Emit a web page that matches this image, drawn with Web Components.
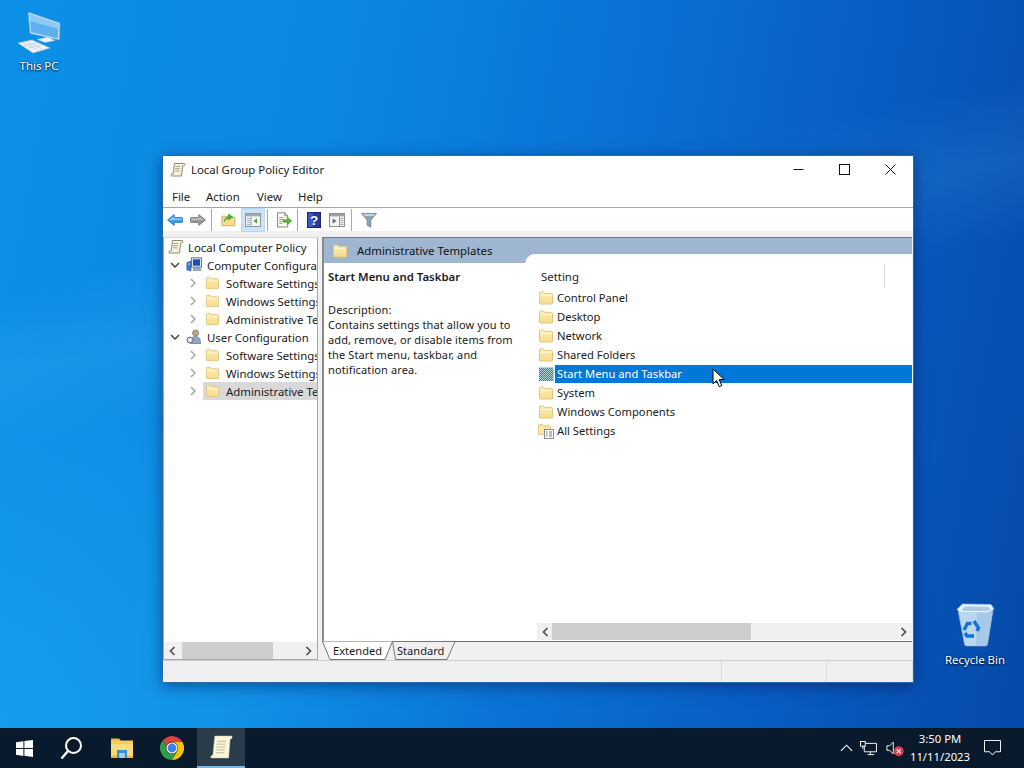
<!DOCTYPE html>
<html>
<head>
<meta charset="utf-8">
<title>Local Group Policy Editor</title>
<style>
  html, body { margin: 0; padding: 0; height: 100%; overflow: hidden; }
  body { font: 11.4px "Noto Sans", "Liberation Sans", sans-serif; color: #1a1a1a; }
</style>
</head>
<body>
<win-desktop>
  <desktop-icon slot="icons" icon="pc" x="1" y="10" gap="4">This PC</desktop-icon>
  <desktop-icon slot="icons" icon="bin" x="937" y="603" gap="5">Recycle Bin</desktop-icon>
  <mmc-window slot="window">
    <title-bar>Local Group Policy Editor</title-bar>
    <menu-bar></menu-bar>
    <tool-bar></tool-bar>
    <div style="display:flex;flex:1;min-height:0">
      <tree-pane>
        <tree-row icon="scroll" level="0" expander="none">Local Computer Policy</tree-row>
        <tree-row icon="computer" level="1" expander="open">Computer Configuration</tree-row>
        <tree-row icon="folder" level="2" expander="closed">Software Settings</tree-row>
        <tree-row icon="folder" level="2" expander="closed">Windows Settings</tree-row>
        <tree-row icon="folder" level="2" expander="closed">Administrative Templates</tree-row>
        <tree-row icon="user" level="1" expander="open">User Configuration</tree-row>
        <tree-row icon="folder" level="2" expander="closed">Software Settings</tree-row>
        <tree-row icon="folder" level="2" expander="closed">Windows Settings</tree-row>
        <tree-row icon="folder" level="2" expander="closed" selected>Administrative Templates</tree-row>
      </tree-pane>
      <detail-pane>
        <list-row icon="folder">Control Panel</list-row>
        <list-row icon="folder">Desktop</list-row>
        <list-row icon="folder">Network</list-row>
        <list-row icon="folder">Shared Folders</list-row>
        <list-row icon="dither" selected>Start Menu and Taskbar</list-row>
        <list-row icon="folder">System</list-row>
        <list-row icon="folder">Windows Components</list-row>
        <list-row icon="allsettings">All Settings</list-row>
      </detail-pane>
    </div>
    <status-bar></status-bar>
  </mmc-window>
  <task-bar slot="taskbar"></task-bar>
</win-desktop>

<script>
const ICONS = {
  folder: `<svg viewBox="0 0 16 16"><defs><linearGradient id="f" x1="0" y1="0" x2="0" y2="1"><stop offset="0" stop-color="#fbeeb8"/><stop offset="1" stop-color="#f6dc8c"/></linearGradient></defs><path d="M1.500 3a1 1 0 0 1 1-1h3.200l1.300 1.400h6.500a1 1 0 0 1 1 1v8.800a.8.8 0 0 1-.8.800H2.300a.8.8 0 0 1-.8-.8z" fill="url(#f)" stroke="#e2c67c"/><path d="M2.200 5h11.600v1H2.200z" fill="#fff6d2"/></svg>`,
  dither: `<svg viewBox="0 0 16 16"><defs><pattern id="d" width="2" height="2" patternUnits="userSpaceOnUse"><rect width="2" height="2" fill="#2f7f96"/><rect width="1" height="1" fill="#b5d6d8"/><rect x="1" y="1" width="1" height="1" fill="#b5d6d8"/></pattern></defs><rect x="1" y="1.500" width="14.500" height="13.500" fill="url(#d)"/></svg>`,
  allsettings: `<svg viewBox="0 0 16 16"><path d="M.5 2.500a1 1 0 0 1 1-1h3l1.200 1.300h5.800a1 1 0 0 1 1 1v7.600H.5z" fill="#f7e6a6" stroke="#e2c67c"/><rect x="6.500" y="6.500" width="9" height="9" fill="#fff" stroke="#8a8a8a"/><path d="M8 9h1.500M11 9h3M8 11h1.500M11 11h3M8 13h1.500M11 13h3" stroke="#777"/></svg>`,
  scroll: `<svg viewBox="0 0 16 16"><path d="M4.500 1.500h9.800c.9 0 .9 2-.2 2.400L12.600 4 11.500 14h-9.700c-1.100 0-1.100-1.900 0-2.200h1.400z" fill="#f8f2d8" stroke="#8f8a78"/><path d="M5.600 4.500h4.600M5.300 6.700h4.600M5 8.900h4.600" stroke="#a8a28c"/></svg>`,
  computer: `<svg viewBox="0 0 16 16"><rect x="5.500" y=".8" width="10" height="9.400" fill="#dfe6ee" stroke="#6b7c92"/><rect x="7" y="2.300" width="7" height="6.400" fill="#1d4fb8"/><path d="M8 11h6l1 2.500H7z" fill="#9fb0c8" stroke="#6b7c92" stroke-width=".6"/><path d="M.8 5.500 5 4v10l-4.200-1z" fill="#3c7fd0" stroke="#245a9c" stroke-width=".6"/><circle cx="3" cy="7" r=".8" fill="#cfe3f7"/></svg>`,
  user: `<svg viewBox="0 0 16 16"><circle cx="9.500" cy="4" r="3" fill="#c9a27a" stroke="#6c7480" stroke-width=".7"/><path d="M4.500 14.500c0-5 1.800-7 5-7s5 2 5 7z" fill="#8fa6c4" stroke="#5d7190" stroke-width=".7"/><circle cx="4" cy="11" r="3" fill="#cfd6de" stroke="#6c7480"/><circle cx="4" cy="11" r="1" fill="#fff"/></svg>`,
  back: `<svg viewBox="0 0 16 16"><path d="M.6 8 7.200 2.600v3h7.600c.5 0 .7.300.7.700v3.400c0 .4-.2.700-.7.700H7.200v3z" fill="#3aa0e8" stroke="#1f6fb5" stroke-width=".8"/><path d="M2.300 8 6.600 4.600v2h8v1.200z" fill="#9ad4f8"/></svg>`,
  forward: `<svg viewBox="0 0 16 16"><path d="M15.400 8 8.800 2.600v3H1.200c-.5 0-.7.300-.7.700v3.400c0 .4.200.7.700.7h7.600v3z" fill="#9a9a9a" stroke="#6f6f6f" stroke-width=".8"/><path d="M1.400 6.600h8V4.800L13.600 8H1.400z" fill="#c4c4c4"/></svg>`,
  up: `<svg viewBox="0 0 16 16"><path d="M1 4.500h4l1 1.200h8.800v9H1z" fill="#f5dd8f" stroke="#cfae5e"/><path d="M3.500 10.500C3.800 7 5.500 5 8 4.400V2l4.600 3.400L8 8.600V6.400c-2 .4-3.400 2-4.500 4.100z" fill="#4fae3a" stroke="#2d8320" stroke-width=".5"/></svg>`,
  tree: `<svg viewBox="0 0 16 16"><rect x=".5" y="1.500" width="15" height="13" fill="#f4f8fb" stroke="#8f989f"/><rect x="1" y="2" width="14" height="2.400" fill="#a3abb2"/><path d="M6 5v9" stroke="#8f989f"/><path d="M2 6.500h3M2 8.500h3M2 10.500h3M2 12.500h3" stroke="#a8b0b6"/><path d="M12 6.500v5L8.400 9z" fill="#4aa53a"/></svg>`,
  export: `<svg viewBox="0 0 16 16"><path d="M1.500.8h7.200l3 3V15H1.500z" fill="#fbfbf4" stroke="#8a8a80"/><path d="M8.700.8v3h3" fill="none" stroke="#8a8a80"/><path d="M3.200 5.500h4M3.200 7.500h4M3.200 9.500h3M3.200 11.500h3" stroke="#a0a090"/><path d="M7 7.800h4.400V5.400L15.800 9l-4.400 3.600v-2.400H7z" fill="#58b63c" stroke="#2f8a1e" stroke-width=".5"/></svg>`,
  help: `<svg viewBox="0 0 14 16"><rect x=".5" y=".5" width="13" height="15" fill="#23379a" stroke="#1b2a78"/><path d="M1 1h5v14H1z" fill="#3d58c4"/><text x="7" y="13" font-family="Liberation Sans, sans-serif" font-weight="700" font-size="13.500" fill="#fff" text-anchor="middle">?</text></svg>`,
  props: `<svg viewBox="0 0 16 16"><rect x=".5" y="1.500" width="15" height="13" fill="#f4f4f4" stroke="#8f8f8f"/><rect x="1" y="2" width="14" height="2.400" fill="#a0a0a0"/><path d="M10.500 5v9" stroke="#8f8f8f"/><path d="M11.500 6.500h3M11.500 8.500h3M11.500 10.500h3M11.500 12.500h3" stroke="#a6a6a6"/><path d="M3.600 6.500v5l4-2.500z" fill="#6a6a6a"/></svg>`,
  filter: `<svg viewBox="0 0 16 16"><path d="M.6 1.400h14.800L9.800 8.200v7l-3.600-2V8.200z" fill="#8ba4b4" stroke="#5f7484" stroke-width=".7"/><path d="M2.400 2.200h11.200l-1.200 1.600H3.600z" fill="#dce7ee"/></svg>`,
  pc: `<svg viewBox="0 0 44 44"><path d="M11 2 43 13 42.500 30 13 23.500z" fill="#d4ebfb" stroke="#5f9fd4" stroke-width=".7"/><path d="M12.500 4 41.500 14 41 28.500 14 22.300z" fill="#5fb0ee"/><path d="M12.500 4 41.500 14v5L13 11z" fill="#8ccbf6"/><path d="M20 29.500l11-2.500 7 3.500-10 2z" fill="#e9f2f8" stroke="#a8c4d8" stroke-width=".5"/><path d="M1 33 15 30 33 38 16 43z" fill="#eef3f7" stroke="#b6c6d2" stroke-width=".6"/><path d="M5 32.500 21 40M9 31.500 25 39M7 36l13-3M11 38l13-3" stroke="#b6c6d2" stroke-width=".6"/></svg>`,
  bin: `<svg viewBox="0 0 40 44"><path d="M3 7 9.500 41.500Q10 43 12 43H30Q32 43 32.500 41.500L38 7z" fill="#b9d8ef" stroke="#8db2d0" stroke-width=".6"/><path d="M22 8 21 43h9Q32 43 32.500 41.500L38 7z" fill="#9cc5e6" opacity=".7"/><path d="M2 6.500 7.500 1 36 1.500 39 6 33 9.500 6 9.500z" fill="#e6f1fa" stroke="#a8c8e0" stroke-width=".6"/><path d="M7 6.500 10 3.500 33.500 3.800 35.500 6.200 32 8 8 8z" fill="#a9cbe5"/><g fill="none" stroke="#1572d8" stroke-width="3.400"><path d="M9 27l3.500-6.500h4"/><path d="M19 18l4.500 7-1.500 3"/><path d="M19 33h-7l-2-3"/></g></svg>`,
  winlogo: `<svg viewBox="0 0 17 17"><path d="M0 2.300 7.400 1.200v6.900H0zM8.400 1.100 17 0v8.100H8.400zM0 9h7.400v6.900L0 14.800zM8.400 9H17v8l-8.600-1.200z" fill="#fff"/></svg>`,
  search: `<svg viewBox="0 0 24 24"><circle cx="13.500" cy="9.500" r="7.500" fill="none" stroke="#fff" stroke-width="2"/><path d="M8 15 1.500 22.500" stroke="#fff" stroke-width="2.400"/></svg>`,
  explorer: `<svg viewBox="0 0 24 22"><path d="M1 1.500h8l2 2.500H1z" fill="#e8b93c"/><path d="M1 3.500h22V21H1z" fill="#f6cd5c"/><path d="M1 7h22v14H1z" fill="#fbdc7c"/><path d="M1 18.500h22V21H1z" fill="#e8b93c"/><path d="M7 13h10v8h-2.500v-5h-5v5H7z" fill="#3f8fd6"/><rect x="9.500" y="16" width="5" height="5" fill="#9fd0f0"/></svg>`,
  chrome: `<svg viewBox="0 0 24 24"><path d="M3.600 3.500A12 12 0 0 1 22.400 6H12a6 6 0 0 0-5.200 9z" fill="#db4437"/><path d="M22.400 6A12 12 0 0 1 12 24l5.200-9A6 6 0 0 0 12 6z" fill="#f4c20d"/><path d="M12 24A12 12 0 0 1 3.600 3.500L6.800 15a6 6 0 0 0 10.400 0z" fill="#2f9e44"/><circle cx="12" cy="12" r="5.600" fill="#fff"/><circle cx="12" cy="12" r="4.400" fill="#3a7ee8"/></svg>`,
  paper: `<svg viewBox="0 0 24 26"><path d="M5 1h18c.6 2-.6 3.400-2 3.400L19.500 24H1c-.6-1.800.4-3 2-3.200z" fill="#fbf6dc" stroke="#cbc4a0" stroke-width=".5"/><path d="M7.500 6.500h9M7 9.500h9M6.700 12.500h9M6.400 15.500h9M6 18.500h9" stroke="#bfb88e"/></svg>`,
  tray_up: `<svg viewBox="0 0 14 8"><path d="M1 7l6-6 6 6" fill="none" stroke="#fff" stroke-width="1.200"/></svg>`,
  network: `<svg viewBox="0 0 18 16"><path d="M4.500 2.500h13v9h-13zM8 14.500h7M11 11.500v3" fill="none" stroke="#fff"/><rect x=".5" y=".5" width="5" height="5" fill="#0a1a2b" stroke="#fff"/><path d="M3 5.500v3" stroke="#fff"/></svg>`,
  volume: `<svg viewBox="0 0 22 18"><path d="M1 6h3l4-4v13l-4-4H1z" fill="none" stroke="#fff"/><circle cx="14" cy="12" r="5.500" fill="#d9394a"/><path d="M11.700 9.700l4.600 4.600M16.300 9.700l-4.600 4.600" stroke="#fff" stroke-width="1.200"/></svg>`,
  notify: `<svg viewBox="0 0 18 17"><path d="M.5.500h17v12h-5.500L9 16l-3-3.500H.5z" fill="none" stroke="#fff"/></svg>`
};

// small helper, every element here is just a template in a shadow root
function shadow(el, html) {
  const t = document.createElement('template');
  t.innerHTML = html;
  el.attachShadow({ mode: 'open' }).appendChild(t.content.cloneNode(true));
}

class UiIcon extends HTMLElement {
  connectedCallback() {
    if (this.shadowRoot) return;
    const w = this.getAttribute('w') || 16;
    const h = this.getAttribute('h') || w;
    shadow(this, `<style>
      :host { display: inline-block; flex: none; width: ${w}px; height: ${h}px; line-height: 0; }
      svg { width: 100%; height: 100%; display: block; }
    </style>${ICONS[this.getAttribute('name')] || ''}`);
  }
}

class WinDesktop extends HTMLElement {
  constructor() {
    super();
    shadow(this, `<style>
      :host {
        display: flex; flex-direction: column; position: relative;
        width: 1024px; height: 768px; overflow: hidden;
        background:
          linear-gradient(168deg, rgba(120,210,255,0) 30%, rgba(120,210,255,.1) 38%, rgba(120,210,255,0) 46%),
          radial-gradient(500px 420px at 0 720px, rgba(40,190,255,.35), rgba(40,190,255,0)),
          linear-gradient(100deg, #0c90e6 0%, #0b88e1 30%, #0a72d4 55%, #085bc0 78%, #0649a9 100%);
      }
      .canvas { flex: 1; }
      .cursor { position: absolute; left: 712px; top: 368px; width: 13px; height: 20px; z-index: 5; }
    </style>
    <div class="canvas"><slot name="icons"></slot><slot name="window"></slot></div>
    <slot name="taskbar"></slot>
    <svg class="cursor" viewBox="0 0 13 20"><path d="M1 1v15l3.600-3.400 2.600 6 2.600-1.100-2.600-5.900h5z" fill="#fff" stroke="#000"/></svg>`);
  }
}

class DesktopIcon extends HTMLElement {
  constructor() {
    super();
    const pc = this.getAttribute('icon') === 'pc';
    shadow(this, `<style>
      :host {
        position: absolute; left: ${this.getAttribute('x')}px; top: ${this.getAttribute('y')}px;
        width: 76px; display: flex; flex-direction: column; align-items: center;
        color: #fff; font-size: 11.4px; text-shadow: 0 1px 2px rgba(0,0,0,.8), 0 0 2px rgba(0,0,0,.5);
      }
      .lab { margin-top: ${this.getAttribute('gap')}px; line-height: 16px; }
    </style>
    <ui-icon name="${this.getAttribute('icon')}" w="${pc ? 44 : 40}" h="44"></ui-icon>
    <div class="lab"><slot></slot></div>`);
  }
}

class MmcWindow extends HTMLElement {
  constructor() {
    super();
    shadow(this, `<style>
      :host {
        position: absolute; left: 162px; top: 155px; width: 750px; height: 526px;
        display: flex; flex-direction: column; background: #f0f0f0;
        border: 1px solid #2a69ad; box-shadow: 0 3px 14px rgba(0,20,80,.5);
      }
    </style><slot></slot>`);
  }
}

class TitleBar extends HTMLElement {
  constructor() {
    super();
    shadow(this, `<style>
      :host { display: flex; align-items: center; height: 27px; background: #fff; flex: none; padding-left: 7px; }
      .t { margin-left: 5px; flex: 1; }
      .b { width: 46px; height: 27px; display: flex; align-items: center; justify-content: center; }
      svg { width: 11px; height: 11px; }
    </style>
    <ui-icon name="scroll"></ui-icon>
    <div class="t"><slot></slot></div>
    <div class="b"><svg viewBox="0 0 11 11"><path d="M.5 5.500h10" stroke="#111"/></svg></div>
    <div class="b"><svg viewBox="0 0 11 11"><rect x=".5" y=".5" width="10" height="10" fill="none" stroke="#111"/></svg></div>
    <div class="b"><svg viewBox="0 0 11 11"><path d="M.5.500l10 10M10.500.500l-10 10" stroke="#111"/></svg></div>`);
  }
}

class MenuBar extends HTMLElement {
  constructor() {
    super();
    shadow(this, `<style>
      :host { display: flex; box-sizing: border-box; height: 24px; padding-top: 2px; align-items: center; background: #fff; flex: none; padding-left: 9px; }
      span:nth-of-type(1) { width: 34px; }
      span:nth-of-type(2) { width: 51px; }
      span:nth-of-type(3) { width: 41px; }
    </style><span>File</span><span>Action</span><span>View</span><span>Help</span>`);
  }
}

class ToolBar extends HTMLElement {
  constructor() {
    super();
    shadow(this, `<style>
      :host { display: block; flex: none; height: 29px; border-top: 1px solid #a6a6a6; background: linear-gradient(#fff 23px, #f0f0f0 23px); }
      .row { display: flex; align-items: center; height: 23px; padding-left: 4px; }
      .sep { width: 1px; height: 22px; background: #a8a8a8; flex: none; }
      .on { width: 22px; height: 22px; background: #cce4f7; border: 1px solid #b8d8f0; display: flex; align-items: center; justify-content: center; margin-left: 5px; }
    </style>
    <div class="row">
      <ui-icon name="back"></ui-icon>
      <ui-icon name="forward" style="margin-left:7px"></ui-icon>
      <i class="sep" style="margin:0 9px 0 5px"></i>
      <ui-icon name="up" w="15"></ui-icon>
      <div class="on"><ui-icon name="tree"></ui-icon></div>
      <i class="sep" style="margin:0 8px 0 2px"></i>
      <ui-icon name="export"></ui-icon>
      <i class="sep" style="margin:0 9px 0 5px"></i>
      <ui-icon name="help" w="14" h="16"></ui-icon>
      <ui-icon name="props" style="margin-left:8px"></ui-icon>
      <i class="sep" style="margin:0 9px 0 6px"></i>
      <ui-icon name="filter"></ui-icon>
    </div>`);
  }
}

class ScrollBar extends HTMLElement {
  constructor() {
    super();
    shadow(this, `<style>
      :host { display: flex; flex: none; height: 17px; background: #f0f0f0; align-items: center; }
      .a { width: 17px; height: 17px; display: flex; align-items: center; justify-content: center; flex: none; }
      .track { flex: 1; height: 17px; }
      .thumb { height: 17px; background: #cdcdcd; margin-left: ${this.getAttribute('offset') || 0}px; width: ${this.getAttribute('thumb')}px; }
      svg { width: 7px; height: 10px; }
    </style>
    <div class="a"><svg viewBox="0 0 7 10"><path d="M5.500 1 1.500 5l4 4" fill="none" stroke="#505050" stroke-width="1.700"/></svg></div>
    <div class="track"><div class="thumb"></div></div>
    <div class="a"><svg viewBox="0 0 7 10"><path d="M1.500 1l4 4-4 4" fill="none" stroke="#505050" stroke-width="1.700"/></svg></div>`);
  }
}

class TreePane extends HTMLElement {
  constructor() {
    super();
    shadow(this, `<style>
      :host { display: flex; flex-direction: column; flex: none; box-sizing: border-box; width: 155px; background: #fff; border: 1px solid #a8a8a8; border-top-color: #d8d8d8; }
      .rows { flex: 1; overflow: hidden; }
    </style>
    <div class="rows"><slot></slot></div>
    <scroll-bar thumb="91" offset="1"></scroll-bar>`);
  }
}

class TreeRow extends HTMLElement {
  constructor() {
    super();
    const level = +this.getAttribute('level');
    const exp = this.getAttribute('expander');
    const sel = this.hasAttribute('selected');
    const chev = exp === 'open'
      ? `<svg viewBox="0 0 10 10"><path d="M1 3l4 4 4-4" fill="none" stroke="#404040" stroke-width="1.500"/></svg>`
      : exp === 'closed'
        ? `<svg viewBox="0 0 10 10"><path d="M3 1l4 4-4 4" fill="none" stroke="#a6a6a6" stroke-width="1.500"/></svg>`
        : '';
    const pad = [4, 6, 24][level];
    const lead = [0, 4, 5][level];
    shadow(this, `<style>
      :host { display: flex; align-items: center; height: 18px; white-space: nowrap; padding-left: ${pad}px; }
      .x { width: 10px; height: 10px; flex: none; display: ${exp === 'none' ? 'none' : 'block'}; }
      svg { display: block; width: 10px; height: 10px; }
      .it { display: flex; align-items: center; height: 18px; flex: 1; min-width: 0; margin-left: ${lead}px; padding-left: ${exp === 'none' ? 0 : 2}px; ${sel ? 'background:#d9d9d9;' : ''} }
      .t { margin-left: ${level === 2 ? 6 : level === 1 ? 5 : 4}px; }
    </style>
    <div class="x">${chev}</div>
    <div class="it"><ui-icon name="${this.getAttribute('icon')}" w="${level === 2 ? 15 : 16}" h="16"></ui-icon><span class="t"><slot></slot></span></div>`);
  }
}

class DetailPane extends HTMLElement {
  constructor() {
    super();
    shadow(this, `<style>
      :host { flex: 1; min-width: 0; display: flex; flex-direction: column; padding-right: 1px; }
      .panel { flex: 1; min-height: 0; display: grid; grid-template-columns: 201px 1fr; margin-left: 4px; background: #fff; border-left: 2px solid #8a8a8a; border-top: 1px solid #6d7b8a; }
      .band { height: 25px; background: #9fb6d1; display: flex; align-items: center; padding-left: 8px; color: #111; }
      .band span { margin-left: 9px; }
      .desc { padding: 6px 0 0 4px; line-height: 15px; white-space: nowrap; font-size: 11px; letter-spacing: .12px; }
      .desc b { display: block; margin-bottom: 18px; font-weight: 600; font-size: 11.4px; letter-spacing: 0; }
      .right { display: flex; flex-direction: column; background: linear-gradient(#9fb6d1, #9fb6d1) top / 100% 25px no-repeat; min-width: 0; }
      .body { flex: 1; margin-top: 16px; background: #fff; border-top-left-radius: 10px; display: flex; flex-direction: column; min-height: 0; }
      .head { height: 24px; margin: 10px 27px 0 16px; display: flex; align-items: center; border-right: 1px solid #e0e0e0; }
      .rows { flex: 1; font-size: 11.2px; }
      scroll-bar { margin: 0 0 1px 12px; }
    </style>
    <div class="panel">
      <div>
        <div class="band"><ui-icon name="folder"></ui-icon><span>Administrative Templates</span></div>
        <div class="desc"><b>Start Menu and Taskbar</b>Description:<br>Contains settings that allow you to<br>add, remove, or disable items from<br>the Start menu, taskbar, and<br>notification area.</div>
      </div>
      <div class="right">
        <div class="body">
          <div class="head">Setting</div>
          <div class="rows"><slot></slot></div>
          <scroll-bar thumb="199" offset="-2"></scroll-bar>
        </div>
      </div>
    </div>
    <tab-strip></tab-strip>`);
  }
}

class ListRow extends HTMLElement {
  constructor() {
    super();
    const sel = this.hasAttribute('selected');
    shadow(this, `<style>
      :host { display: flex; align-items: center; height: 19px; padding-left: 13px; white-space: nowrap; }
      .l { flex: 1; margin-left: 1px; padding-left: 2px; line-height: 18px; ${sel ? 'background:#0078d7;color:#fff;' : ''} }
    </style>
    <ui-icon name="${this.getAttribute('icon')}"></ui-icon>
    <div class="l"><slot></slot></div>`);
  }
}

class TabStrip extends HTMLElement {
  constructor() {
    super();
    shadow(this, `<style>
      :host { display: block; position: relative; flex: none; height: 18px; margin-left: 4px; border-top: 1px solid #6a6a6a; background: #f0f0f0; font-size: 11.1px; }
      svg { position: absolute; left: 0; top: -1px; width: 140px; height: 20px; }
      .tabs { position: relative; display: flex; line-height: 18px; padding-left: 11px; }
      .tabs span:first-child { width: 64px; }
    </style>
    <svg viewBox="0 0 140 20"><path d="M70.500 .5 73.500 18.500H125L133 .5z" fill="#f0f0f0" stroke="#777"/><path d="M.5 .5 8 18.500H63L70.500 .5z" fill="#fff"/><path d="M.5 .5 8 18.500H63L70.500 .5" fill="none" stroke="#777"/></svg>
    <div class="tabs"><span>Extended</span><span>Standard</span></div>`);
  }
}

class StatusBar extends HTMLElement {
  constructor() {
    super();
    shadow(this, `<style>
      :host { display: flex; flex: none; height: 21px; border-top: 1px solid #cfcfcf; background: #f0f0f0; }
      div { border-right: 1px solid #dcdcdc; }
      .a { width: 558px; } .b { width: 104px; } .c { width: 85px; }
    </style><div class="a"></div><div class="b"></div><div class="c"></div>`);
  }
}

class TaskBar extends HTMLElement {
  constructor() {
    super();
    shadow(this, `<style>
      :host { display: flex; flex: none; height: 40px; background: #081a2c; color: #fff; font-size: 11.3px; position: relative; z-index: 2; }
      .i { height: 40px; display: flex; align-items: center; justify-content: center; flex: none; box-sizing: border-box; }
      .active { background: #2a3b49; margin-left: 1px; border-bottom: 2px solid #76b9ed; }
      .tray { margin-left: auto; display: flex; padding-right: 12px; }
      .clock { width: 64px; text-align: center; line-height: 18px; align-self: center; }
    </style>
    <div class="i" style="width:48px"><ui-icon name="winlogo" w="17"></ui-icon></div>
    <div class="i" style="width:48px"><ui-icon name="search" w="24"></ui-icon></div>
    <div class="i" style="width:52px"><ui-icon name="explorer" w="24" h="22"></ui-icon></div>
    <div class="i" style="width:48px"><ui-icon name="chrome" w="24"></ui-icon></div>
    <div class="i active" style="width:48px"><ui-icon name="paper" w="23" h="25"></ui-icon></div>
    <div class="tray">
      <div class="i" style="width:20px"><ui-icon name="tray_up" w="13" h="8"></ui-icon></div>
      <div class="i" style="width:24px"><ui-icon name="network" w="17" h="15"></ui-icon></div>
      <div class="i" style="width:28px;padding-left:4px"><ui-icon name="volume" w="20" h="17"></ui-icon></div>
      <div class="clock">3:50 PM<br>11/11/2023</div>
      <div class="i" style="width:40px"><ui-icon name="notify" w="17" h="16"></ui-icon></div>
    </div>`);
  }
}

customElements.define('ui-icon', UiIcon);
customElements.define('win-desktop', WinDesktop);
customElements.define('desktop-icon', DesktopIcon);
customElements.define('mmc-window', MmcWindow);
customElements.define('title-bar', TitleBar);
customElements.define('menu-bar', MenuBar);
customElements.define('tool-bar', ToolBar);
customElements.define('scroll-bar', ScrollBar);
customElements.define('tree-pane', TreePane);
customElements.define('tree-row', TreeRow);
customElements.define('detail-pane', DetailPane);
customElements.define('list-row', ListRow);
customElements.define('tab-strip', TabStrip);
customElements.define('status-bar', StatusBar);
customElements.define('task-bar', TaskBar);
</script>
</body>
</html>
